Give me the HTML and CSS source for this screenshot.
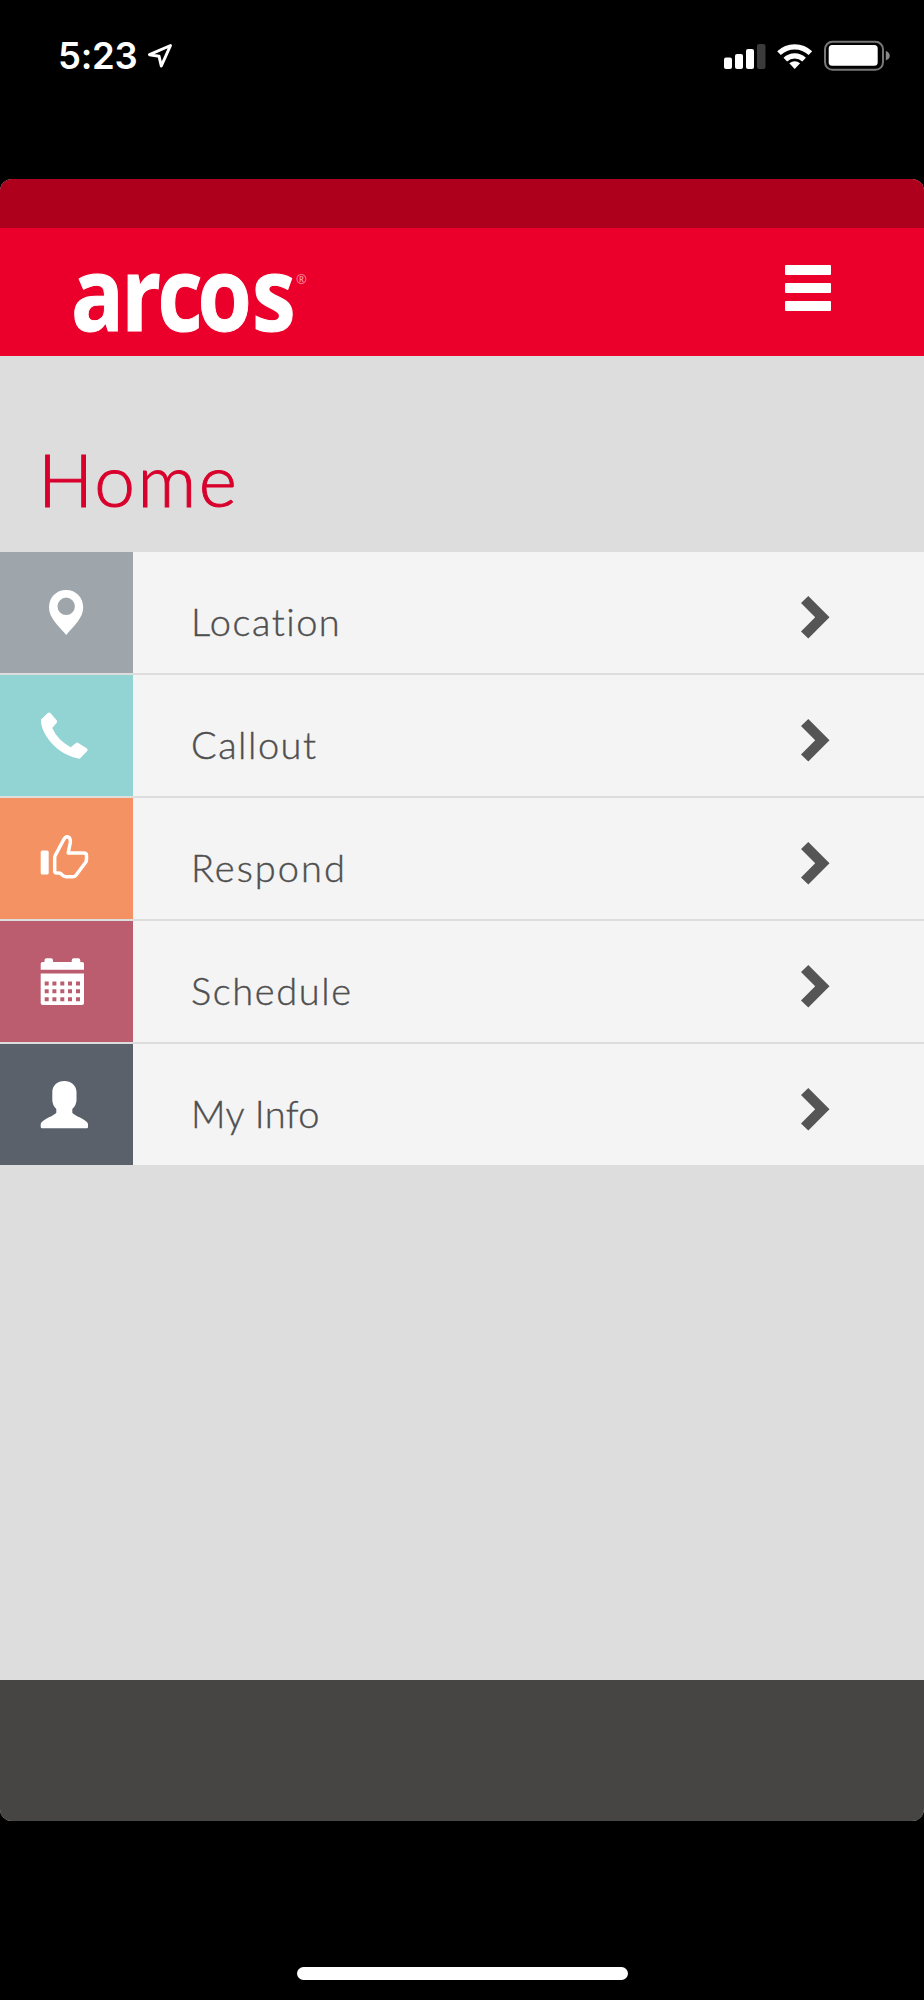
FILE: index.html
```html
<!DOCTYPE html>
<html lang="en">
<head>
<meta charset="utf-8">
<title>Home</title>
<link rel="stylesheet" href="styles.css">
</head>
<body>
<div class="status">
  <div class="clock"><span class="time">5:23</span>
    <svg class="nav-arrow" width="28" height="28" viewBox="146 42 28 28"><path d="M170.500 45.500 149.500 54.700 159 56.200 161.300 66Z" fill="none" stroke="#fff" stroke-width="3" stroke-linejoin="round"/></svg>
  </div>
  <svg class="indicators" width="174" height="36" viewBox="720 38 174 36">
    <g fill="#fff"><rect x="724" y="57.500" width="8" height="11.500" rx="2"/><rect x="735" y="54" width="8" height="15" rx="2"/><rect x="746" y="49" width="8" height="20" rx="2"/></g>
    <rect x="757" y="44" width="8.500" height="25" rx="2" fill="#3b3b3b"/>
    <g fill="none" stroke="#fff" stroke-width="5.200"><path d="M779 53.200a22.500 22.500 0 0 1 31.400 0"/><path d="M785.300 59.700a13.500 13.500 0 0 1 18.800 0"/></g>
    <path d="M794.700 69 789.300 63.300q5.400-4 10.800 0Z" fill="#fff"/>
    <rect x="825" y="41.800" width="58" height="28" rx="7.500" fill="none" stroke="#777" stroke-width="2"/>
    <rect x="828.700" y="45" width="49" height="20.800" rx="3.500" fill="#fff"/>
    <path d="M885.800 51q4 1.500 4 4.700t-4 4.700Z" fill="#888"/>
  </svg>
</div>
<main class="app">
  <div class="app-strip"></div>
  <header class="app-header">
    <svg class="logo" width="240" height="90" viewBox="0 0 240 90">
      <text class="logo-word" transform="scale(.86 1)" x="-2.300 56 98.300 144.800 208" y="75.500">arcos</text>
      <text class="logo-mark" x="223" y="29">®</text>
    </svg>
    <div class="menu"><i></i><i></i><i></i></div>
  </header>
  <h1 class="title">Home</h1>
  <nav class="list">
    <a class="row"><svg class="tile location" viewBox="0 0 133 121"><path fill-rule="evenodd" d="M66.200 38C56 38 49 45.500 49 55.500 49 66 58.500 73.500 66.200 83 73.900 73.500 83.200 66 83.200 55.500 83.200 45.500 76 38 66.200 38ZM66.200 45.600a8.700 8.700 0 1 1 0 17.400 8.700 8.700 0 0 1 0-17.400Z"/></svg><span class="label l1">Location</span><svg class="chevron" viewBox="0 0 30 44"><path d="M1 8 8.300 1 29.500 22.300 8.300 43.500 1 36.500 15.200 22.300Z"/></svg></a>
    <a class="row"><svg class="tile callout" viewBox="0 0 133 121"><path d="M47.800 38Q49.300 36.800 50.700 38.200L56.800 45.500Q57.500 46.700 56.700 47.700L52.300 53Q57.500 65 70.700 72.300L76 67.900Q77.100 67.200 78.300 67.900L87 73.500Q88.300 74.600 87.200 76L80.500 83Q79.700 83.900 78 83.600 58 79 46.500 61.500 40.700 52.500 41 44.500Z"/></svg><span class="label l2">Callout</span><svg class="chevron" viewBox="0 0 30 44"><path d="M1 8 8.300 1 29.500 22.300 8.300 43.500 1 36.500 15.200 22.300Z"/></svg></a>
    <a class="row"><svg class="tile respond" viewBox="0 0 133 121"><rect x="40.700" y="52.500" width="8" height="24" rx="1.500"/><path class="outline" d="M54.700 59.500Q54.700 58 55.500 57L63.200 42.500Q65 38.500 67.500 38.700 70.700 39.200 70.300 44.500L68.200 55H84Q86.500 55 86.500 57.500V61.500Q86.500 63 85.500 64.500L76 77.300Q75 78.700 73.300 78.700H65.500Q64 78.700 60.300 75.300L55.500 74.800Q54.700 74.500 54.700 73Z"/></svg><span class="label l3">Respond</span><svg class="chevron" viewBox="0 0 30 44"><path d="M1 8 8.300 1 29.500 22.300 8.300 43.500 1 36.500 15.200 22.300Z"/></svg></a>
    <a class="row"><svg class="tile schedule" viewBox="0 0 133 121"><path d="M40.700 48.700V42.700Q40.700 41 42.500 41H44.500V39.300Q44.500 37.300 46.500 37.300H51Q53 37.300 53 39.300V41H71.700V39.300Q71.700 37.300 73.700 37.300H78.300Q80.300 37.300 80.300 39.300V41H82.200Q84 41 84 42.700V48.700Z"/><path fill-rule="evenodd" d="M40.700 52.500H84V82Q84 84 82 84H42.700Q40.700 84 40.700 82ZM44.700 60.500v4h4v-4ZM52.400 60.500v4h4v-4ZM60.300 60.500v4h4v-4ZM68 60.500v4h4v-4ZM76 60.500v4h4v-4ZM44.700 68.300v4h4v-4ZM52.400 68.300v4h4v-4ZM60.300 68.300v4h4v-4ZM68 68.300v4h4v-4ZM76 68.300v4h4v-4ZM44.700 76.200v4h4v-4ZM52.400 76.200v4h4v-4ZM60.300 76.200v4h4v-4ZM68 76.200v4h4v-4ZM76 76.200v4h4v-4Z"/></svg><span class="label l4">Schedule</span><svg class="chevron" viewBox="0 0 30 44"><path d="M1 8 8.300 1 29.500 22.300 8.300 43.500 1 36.500 15.200 22.300Z"/></svg></a>
    <a class="row"><svg class="tile info" viewBox="0 0 133 121"><path d="M64.300 37C57.500 37 52.300 41.500 52.300 48V56Q52.300 61 56.300 65V68.700Q55 70.500 48.500 73.500 40.700 77.500 40.700 80V83Q40.700 84.300 42 84.300H86.700Q88 84.300 88 83V80Q88 77.500 80 73.500 73.500 70.500 72.300 68.700V65Q76.500 61 76.500 56V48C76.500 41.500 71 37 64.300 37Z"/></svg><span class="label l5">My Info</span><svg class="chevron" viewBox="0 0 30 44"><path d="M1 8 8.300 1 29.500 22.300 8.300 43.500 1 36.500 15.200 22.300Z"/></svg></a>
  </nav>
  <footer class="app-footer"></footer>
</main>
<div class="home-area"><div class="home-bar"></div></div>
</body>
</html>
```
FILE: styles.css
```css
* { box-sizing: border-box; }
body { margin: 0; width: 924px; height: 2000px; background: #000; display: flex; flex-direction: column; overflow: hidden; }
svg { display: block; flex: none; }
.status { height: 179px; padding: 38px 30px 0 58px; display: flex; justify-content: space-between; align-items: flex-start; }
.clock { display: flex; align-items: center; height: 36px; }
.time { width: 88px; font: 600 36.5px/36px Inter, sans-serif; letter-spacing: -.3px; color: #fff; }
.app { height: 1642px; flex: none; display: flex; flex-direction: column; background: #ddd; border-radius: 12px; overflow: hidden; }
.app-strip { height: 49px; background: #ae001c; }
.app-header { height: 128px; background: #ea002a; padding: 27px 93px 0 73px; display: flex; justify-content: space-between; align-items: flex-start; }
.logo { overflow: visible; }
.logo-word { font: 700 102px "Open Sans", sans-serif; fill: #fff; stroke: #fff; stroke-width: 1; }
.logo-mark { font: 400 13px "Open Sans", sans-serif; fill: #ff9aac; }
.menu { padding-top: 10px; width: 46px; display: grid; gap: 8px; }
.menu i { height: 10px; background: #fff; border-radius: 1px; }
.title { margin: 0; height: 196px; padding: 83px 0 0 38px; font: 300 73px/80px Lato, sans-serif; letter-spacing: 2.4px; color: #d8002c; -webkit-text-stroke: 1px #d8002c; }
.list { display: flex; flex-direction: column; gap: 2px; }
.row { height: 121px; display: flex; align-items: center; background: #f4f4f4; padding-right: 94px; }
.tile { width: 133px; height: 121px; fill: #fff; }
.location { background: #9fa6ab; }
.callout { background: #91d4d3; }
.respond { background: #f49263; }
.schedule { background: #bb5d6f; }
.info { background: #5b616b; }
.outline { fill: none; stroke: #fff; stroke-width: 3.5; stroke-linejoin: round; }
.label { flex: 1; padding: 16px 0 0 58px; font: 300 38px/46px Lato, sans-serif; color: #4f4f4f; -webkit-text-stroke: .4px #4f4f4f; }
.l1 { letter-spacing: 1.5px; }
.l2 { letter-spacing: 1.5px; }
.l3 { letter-spacing: 2px; }
.l4 { letter-spacing: 1.6px; }
.l5 { letter-spacing: .4px; }
.chevron { width: 30px; height: 44px; margin-top: 8px; fill: #555; }
.app-footer { height: 141px; margin-top: auto; background: #474543; }
.home-area { flex: 1; padding-top: 146px; display: flex; justify-content: center; }
.home-bar { width: 331px; height: 13px; border-radius: 7px; background: #fff; }
```
